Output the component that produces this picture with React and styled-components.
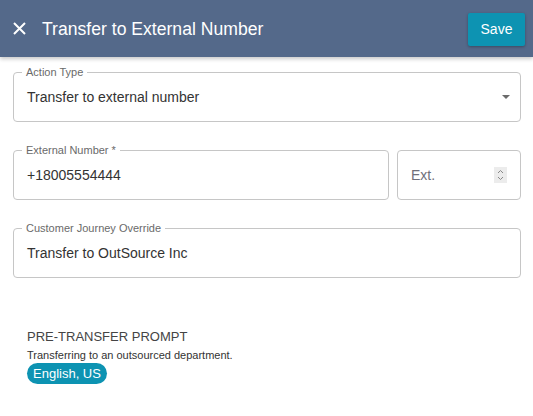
import React from "react";
import styled, { createGlobalStyle } from "styled-components";

const Global = createGlobalStyle`
  html, body { margin: 0; padding: 0; background: #fff; }
  body { font-family: "Liberation Sans", Arial, sans-serif; color: #333; }
  * { box-sizing: border-box; }
`;

const Page = styled.div`
  width: 533px;
  height: 416px;
  background: #fff;
  overflow: hidden;
`;

const Header = styled.header`
  height: 57px;
  background: #54698a;
  display: flex;
  align-items: center;
  padding: 0 8px 0 12px;
  box-shadow: 0 2px 4px rgba(0, 0, 0, 0.22);
  position: relative;
  z-index: 1;
`;

const CloseButton = styled.button`
  width: 15px;
  height: 15px;
  padding: 0;
  border: 0;
  background: none;
  display: flex;
  align-items: center;
  justify-content: center;
  margin-right: 15px;
  cursor: pointer;
`;

const Title = styled.h1`
  flex: 1;
  margin: 0;
  font-size: 17.6px;
  font-weight: 400;
  color: #fff;
  line-height: 22px;
`;

const SaveButton = styled.button`
  width: 57px;
  height: 33px;
  margin-top: 1px;
  border: 0;
  border-radius: 2px;
  background: #0d93b2;
  color: #fff;
  font-family: inherit;
  font-size: 14px;
  box-shadow: 0 1px 3px rgba(0, 0, 0, 0.3);
`;

const Content = styled.main`
  padding: 15px 12px 0 13px;
`;

const Form = styled.div`
  display: flex;
  flex-direction: column;
  gap: 28px;
`;

const Row = styled.div`
  display: grid;
  grid-template-columns: 1fr 124px;
  gap: 8px;
`;

const Field = styled.div`
  position: relative;
  height: 50px;
  border: 1px solid #c6c6c6;
  border-radius: 4px;
  display: flex;
  align-items: center;
  padding: 0 13px 0 13px;
`;

const Label = styled.span`
  position: absolute;
  top: -7px;
  left: 8px;
  padding: 0 4px;
  background: #fff;
  font-size: 11px;
  line-height: 13px;
  color: #6a6a6a;
`;

const Value = styled.span`
  flex: 1;
  font-size: 14px;
  color: ${(p) => (p.$placeholder ? "#6f6f7a" : "#333")};
  line-height: 16px;
`;

const Caret = styled.span`
  width: 0;
  height: 0;
  border-left: 4.5px solid transparent;
  border-right: 4.5px solid transparent;
  border-top: 4.5px solid #6b6b6b;
  margin-right: -3px;
`;

const Spinner = styled.span`
  width: 13px;
  height: 16px;
  background: #ececec;
  display: flex;
  align-items: center;
  justify-content: center;
`;

const Section = styled.section`
  margin-top: 51px;
  padding-left: 14px;
`;

const SectionTitle = styled.h2`
  margin: 0;
  font-size: 13px;
  line-height: 16px;
  font-weight: 400;
  color: #444;
`;

const Description = styled.p`
  margin: 4px 0 1px;
  font-size: 11px;
  line-height: 13px;
  color: #333;
`;

const Chip = styled.span`
  display: inline-flex;
  align-items: center;
  height: 21px;
  padding: 0 6px;
  border-radius: 11px;
  background: #0d93b2;
  color: #fff;
  font-size: 13px;
`;

export default function App() {
  return (
    <Page>
      <Global />
      <Header>
        <CloseButton aria-label="Close">
          <svg width="13" height="13" viewBox="0 0 13 13">
            <path d="M1 1 L12 12 M12 1 L1 12" stroke="#fff" strokeWidth="2" />
          </svg>
        </CloseButton>
        <Title>Transfer to External Number</Title>
        <SaveButton>Save</SaveButton>
      </Header>
      <Content>
        <Form>
          <Field>
            <Label>Action Type</Label>
            <Value>Transfer to external number</Value>
            <Caret />
          </Field>
          <Row>
            <Field>
              <Label>External Number *</Label>
              <Value>+18005554444</Value>
            </Field>
            <Field>
              <Value $placeholder>Ext.</Value>
              <Spinner>
                <svg width="7" height="12" viewBox="0 0 7 12">
                  <path d="M1 4 L3.5 1.5 L6 4 M1 8 L3.5 10.5 L6 8" stroke="#888" strokeWidth="1" fill="none" />
                </svg>
              </Spinner>
            </Field>
          </Row>
          <Field>
            <Label>Customer Journey Override</Label>
            <Value>Transfer to OutSource Inc</Value>
          </Field>
        </Form>
        <Section>
          <SectionTitle>PRE-TRANSFER PROMPT</SectionTitle>
          <Description>Transferring to an outsourced department.</Description>
          <Chip>English, US</Chip>
        </Section>
      </Content>
    </Page>
  );
}
